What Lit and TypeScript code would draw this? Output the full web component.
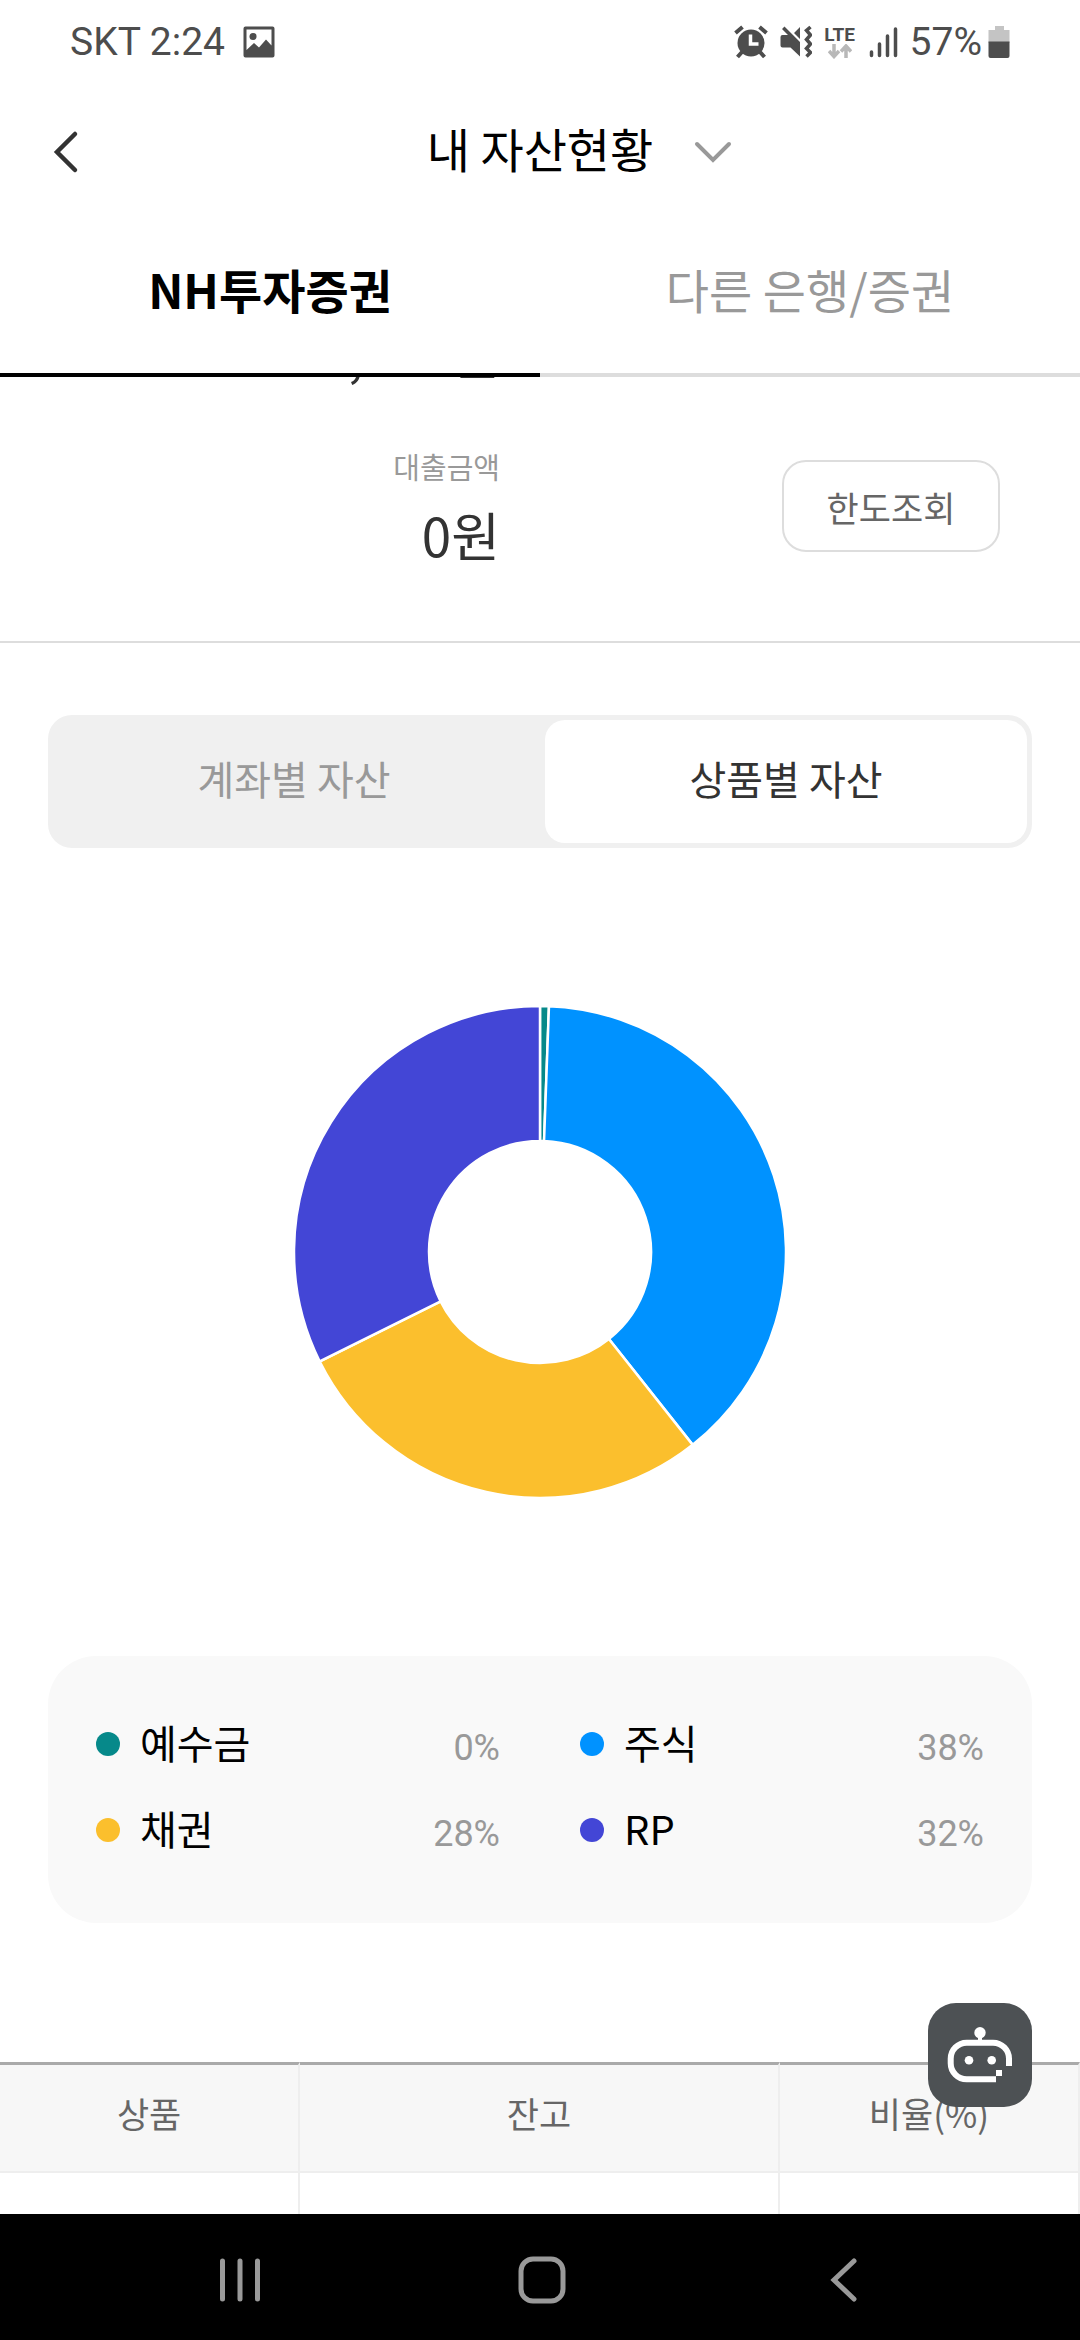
import { LitElement, html, svg, css } from "lit";
import { customElement, property, state } from "lit/decorators.js";
import { classMap } from "lit/directives/class-map.js";
import { styleMap } from "lit/directives/style-map.js";

interface Holding {
  name: string;
  share: number;
  percent: string;
  color: string;
}

const HOLDINGS: Holding[] = [
  { name: "예수금", share: 0.58, percent: "0%", color: "#06898a" },
  { name: "주식", share: 38.76, percent: "38%", color: "#0092ff" },
  { name: "채권", share: 28.32, percent: "28%", color: "#fbbf2d" },
  { name: "RP", share: 32.34, percent: "32%", color: "#4346d6" },
];

@customElement("status-bar")
class StatusBar extends LitElement {
  static styles = css`
    :host {
      display: flex;
      align-items: center;
      justify-content: space-between;
      height: 84px;
      padding: 0 70px;
      color: #4d4d4d;
      font-family: Roboto, "Noto Sans CJK KR", sans-serif;
      font-size: 39px;
      line-height: 48px;
    }
    .side {
      display: flex;
      align-items: center;
    }
    .left {
      gap: 18px;
    }
    .right {
      gap: 12px;
    }
    .network {
      display: flex;
      flex-direction: column;
      align-items: center;
      width: 32px;
      font-size: 19px;
      font-weight: 700;
      line-height: 18px;
    }
    .charge {
      display: flex;
      align-items: center;
      gap: 6px;
    }
    svg {
      display: block;
    }
  `;

  render() {
    return html`
      <div class="side left">
        <span>SKT 2:24</span>
        <svg width="32" height="32" viewBox="0 0 32 32" aria-hidden="true">
          <path fill="currentColor" fill-rule="evenodd"
            d="M2.500 .5h27a2 2 0 0 1 2 2v27a2 2 0 0 1-2 2h-27a2 2 0 0 1-2-2v-27a2 2 0 0 1 2-2zM3.500 3.500v20.500l7.500-7 5 4.500 7-8 5.500 6V3.500z" />
          <circle cx="10" cy="10.500" r="3.500" fill="currentColor" />
        </svg>
      </div>
      <div class="side right">
        <svg width="34" height="34" viewBox="0 0 34 34" aria-hidden="true">
          <circle cx="17" cy="18" r="13.500" fill="currentColor" />
          <g stroke="currentColor" stroke-width="4" fill="none">
            <path d="M1.500 8 8.500 2M32.500 8l-7-6M8 27l-4.500 5M26 27l4.500 5" />
          </g>
          <path d="M16.500 9.500V19h8" stroke="#fff" stroke-width="3.500" fill="none" />
        </svg>
        <svg width="32" height="34" viewBox="0 0 32 34" aria-hidden="true">
          <path fill="currentColor" d="M.5 12q0-2 2-2h5.500L2 4l2.500-2.500L20 17v14.500L10.500 22.500h-8q-2 0-2-2zM20 2v12l-6-6z" />
          <path d="M30.500 2l-4 3.500 4 4.500-4 4.500 4 4.500-4 4.500 4 4-4 4" stroke="currentColor" stroke-width="3.500" fill="none" />
        </svg>
        <div class="network">
          <span>LTE</span>
          <svg width="24" height="15" viewBox="0 0 24 15" aria-hidden="true">
            <g stroke="#b8b8b8" stroke-width="3.500" fill="none">
              <path d="M6 0v12M1 7l5 5.500L11 7M18 14V2M13 7.500 18 2l5 5.500" />
            </g>
          </svg>
        </div>
        <svg width="30" height="32" viewBox="0 0 30 32" aria-hidden="true">
          <g stroke="currentColor" stroke-width="3.500" stroke-linecap="round">
            <path d="M3.500 26v3.500M11.500 18v11.500M19.500 10v19.500M27.500 3v26.500" />
          </g>
        </svg>
        <div class="charge">
          <span>57%</span>
          <svg width="22" height="34" viewBox="0 0 22 34" aria-hidden="true">
            <path fill="#c4c4c4" d="M7 1h9v4h5.500v13H.5V5H7z" />
            <path fill="currentColor" d="M.5 16.500h21V31q0 2-2 2h-17q-2 0-2-2z" />
          </svg>
        </div>
      </div>
    `;
  }
}

@customElement("donut-chart")
class DonutChart extends LitElement {
  @property({ attribute: false }) items: Holding[] = [];

  static styles = css`
    :host {
      display: flex;
      justify-content: center;
    }
  `;

  private slice(from: number, to: number): string {
    const at = (turn: number, radius: number) => {
      const a = turn * 2 * Math.PI;
      return `${246 + radius * Math.sin(a)} ${246 - radius * Math.cos(a)}`;
    };
    const large = to - from > 0.5 ? 1 : 0;
    return `M${at(from, 246)}A246 246 0 ${large} 1 ${at(to, 246)}L${at(to, 111)}A111 111 0 ${large} 0 ${at(from, 111)}Z`;
  }

  render() {
    let start = 0;
    return html`
      <svg width="492" height="492" viewBox="0 0 492 492" role="img" aria-label="상품별 자산">
        ${this.items.map((item) => {
          const end = start + item.share / 100;
          const path = this.slice(start, end);
          start = end;
          return svg`<path d=${path} fill=${item.color} stroke="#fff" stroke-width="2.500" />`;
        })}
      </svg>
    `;
  }
}

@customElement("app-root")
class AppRoot extends LitElement {
  @state() private tab = 0;
  @state() private view = 1;

  static styles = css`
    :host {
      display: flex;
      flex-direction: column;
      position: relative;
      height: 100vh;
      overflow: hidden;
      background: #fff;
      color: #000;
      font-family: "Noto Sans CJK KR", sans-serif;
    }
    * {
      box-sizing: border-box;
    }
    button {
      margin: 0;
      padding: 0;
      border: 0;
      background: none;
      color: inherit;
      font: inherit;
      cursor: pointer;
    }
    svg {
      display: block;
    }
    .header {
      display: grid;
      grid-template-columns: 1fr auto 1fr;
      align-items: center;
      height: 132px;
      padding-top: 4px;
      flex: none;
    }
    .back {
      justify-self: start;
      padding: 20px 52px;
    }
    .title {
      margin: 0;
      padding-bottom: 8px;
      font-size: 47px;
      font-weight: 400;
      line-height: 64px;
    }
    .more {
      justify-self: start;
      padding: 20px 40px;
    }
    .tabs {
      display: flex;
      flex: none;
    }
    .tab {
      flex: 1;
      height: 161px;
      padding-bottom: 12px;
      border-bottom: 4px solid #ddd;
      color: #999;
      font-size: 47px;
      line-height: 64px;
    }
    .tab.on {
      border-color: #000;
      color: #000;
      font-weight: 700;
    }
    .content {
      flex: 1;
      min-height: 0;
      overflow: hidden;
    }
    .summary {
      display: flex;
      flex-direction: column;
      gap: 54px;
      margin-top: -61px;
      padding-bottom: 71px;
      border-bottom: 2px solid #ddd;
      color: #333;
    }
    .entry {
      display: grid;
      grid-template-columns: 1fr 1fr;
      align-items: center;
      padding: 0 80px 0 0;
    }
    .figures {
      text-align: right;
    }
    .caption {
      margin: 0 0 8px;
      color: #999;
      font-size: 29px;
      line-height: 48px;
    }
    .amount {
      margin: 0;
      font-size: 53px;
      line-height: 72px;
    }
    .limit {
      justify-self: end;
      width: 218px;
      height: 92px;
      border: 2px solid #ddd;
      border-radius: 24px;
      color: #666;
      font-size: 35px;
    }
    .switch {
      display: flex;
      gap: 10px;
      height: 133px;
      margin: 72px 48px 0;
      padding: 5px;
      border-radius: 24px;
      background: #f0f0f0;
      font-size: 40px;
    }
    .choice {
      flex: 1;
      padding-bottom: 8px;
      border-radius: 20px;
      color: #999;
    }
    .choice.on {
      background: #fff;
      color: #333;
    }
    .chart {
      margin: 158px 0;
    }
    .legend {
      display: grid;
      grid-template-columns: 1fr 1fr;
      column-gap: 80px;
      margin: 0 48px;
      padding: 45px 48px 50px;
      border-radius: 48px;
      background: #f9f9f9;
    }
    .item {
      display: flex;
      align-items: center;
      gap: 20px;
      height: 86px;
    }
    .dot {
      width: 24px;
      height: 24px;
      border-radius: 50%;
    }
    .name {
      flex: 1;
      padding-bottom: 4px;
      font-size: 40px;
      line-height: 56px;
    }
    .percent {
      padding-top: 8px;
      color: #999;
      font-family: Roboto, sans-serif;
      font-size: 36px;
      line-height: 48px;
    }
    .products {
      width: 100%;
      margin-top: 139px;
      border-spacing: 0;
      table-layout: fixed;
      color: #666;
      font-size: 35px;
    }
    .narrow {
      width: 27.8%;
    }
    .products th {
      height: 111px;
      padding: 0 0 12px;
      border-top: 3px solid #aaa;
      border-bottom: 2px solid #eee;
      background: #f7f7f7;
      font-weight: 400;
    }
    .products td {
      height: 106px;
      padding: 0;
    }
    .products th,
    .products td {
      border-right: 2px solid #eee;
    }
    .chatbot {
      position: absolute;
      right: 48px;
      bottom: 233px;
      width: 104px;
      height: 104px;
      border-radius: 28px;
      background: #4d5154;
    }
    .system {
      display: flex;
      justify-content: space-around;
      align-items: center;
      flex: none;
      height: 126px;
      padding: 6px 86px 0 90px;
      background: #000;
      color: #999;
    }
    .key {
      padding: 16px 40px;
    }
  `;

  render() {
    const tabs = ["NH투자증권", "다른 은행/증권"];
    const views = ["계좌별 자산", "상품별 자산"];
    return html`
      <status-bar></status-bar>
      <header class="header">
        <button class="back" aria-label="뒤로">
          <svg width="28" height="44" viewBox="0 0 28 44" fill="none" stroke="#333" stroke-width="4.500" stroke-linecap="round">
            <path d="M23 4 5 22l18 18" />
          </svg>
        </button>
        <h1 class="title">내 자산현황</h1>
        <button class="more" aria-label="메뉴 펼치기">
          <svg width="40" height="24" viewBox="0 0 40 24" fill="none" stroke="#999" stroke-width="4" stroke-linecap="round">
            <path d="M4 4l16 16L36 4" />
          </svg>
        </button>
      </header>
      <nav class="tabs">
        ${tabs.map(
          (label, i) => html`<button class=${classMap({ tab: true, on: this.tab === i })} @click=${() => (this.tab = i)}>${label}</button>`
        )}
      </nav>
      <main class="content">
        <section class="summary">
          <div class="entry">
            <div class="figures"><p class="amount">,000원</p></div>
          </div>
          <div class="entry">
            <div class="figures">
              <p class="caption">대출금액</p>
              <p class="amount">0원</p>
            </div>
            <button class="limit">한도조회</button>
          </div>
        </section>
        <div class="switch">
          ${views.map(
            (label, i) => html`<button class=${classMap({ choice: true, on: this.view === i })} @click=${() => (this.view = i)}>${label}</button>`
          )}
        </div>
        <donut-chart class="chart" .items=${HOLDINGS}></donut-chart>
        <section class="legend">
          ${HOLDINGS.map(
            (h) => html`
              <div class="item">
                <span class="dot" style=${styleMap({ background: h.color })}></span>
                <span class="name">${h.name}</span>
                <span class="percent">${h.percent}</span>
              </div>
            `
          )}
        </section>
        <table class="products">
          <thead>
            <tr>
              <th class="narrow" scope="col">상품</th>
              <th scope="col">잔고</th>
              <th class="narrow" scope="col">비율(%)</th>
            </tr>
          </thead>
          <tbody>
            <tr>
              <td></td>
              <td></td>
              <td></td>
            </tr>
          </tbody>
        </table>
      </main>
      <button class="chatbot" aria-label="챗봇">
        <svg width="104" height="104" viewBox="0 0 104 104" aria-hidden="true">
          <path d="M68 76.300H38.700a16 16 0 0 1-16-16V55.700a16 16 0 0 1 16-16H65a16 16 0 0 1 16 16V63" fill="none" stroke="#fff" stroke-width="6" />
          <path d="M68 67h6v6h-6zM50 33h4v6h-4z" fill="#fff" />
          <circle cx="52" cy="29.700" r="5.700" fill="#fff" />
          <circle cx="41" cy="57.300" r="4.300" fill="#fff" />
          <circle cx="63.700" cy="57.300" r="4.300" fill="#fff" />
        </svg>
      </button>
      <nav class="system">
        <button class="key" aria-label="최근 앱">
          <svg width="44" height="46" viewBox="0 0 44 46" stroke="currentColor" stroke-width="5" stroke-linecap="round">
            <path d="M4.500 4v38M22 4v38M39.500 4v38" />
          </svg>
        </button>
        <button class="key" aria-label="홈">
          <svg width="48" height="48" viewBox="0 0 48 48" fill="none" stroke="currentColor" stroke-width="5">
            <rect x="3" y="3" width="42" height="42" rx="12" />
          </svg>
        </button>
        <button class="key" aria-label="이전">
          <svg width="44" height="46" viewBox="0 0 44 46" fill="none" stroke="currentColor" stroke-width="5" stroke-linecap="round">
            <path d="M32 4 12 23l20 19" />
          </svg>
        </button>
      </nav>
    `;
  }
}
